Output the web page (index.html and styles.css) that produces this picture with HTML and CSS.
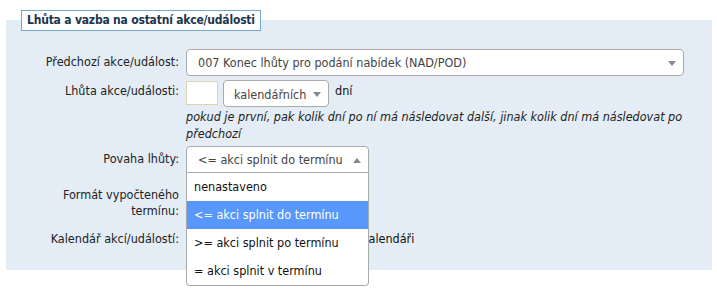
FILE: index.html
```html
<!DOCTYPE html>
<html lang="cs">
<head>
    <meta charset="UTF-8">
    <title>Lhůta a vazba</title>
    <link rel="stylesheet" href="styles.css">
</head>
<body>
    <div class="sekce">
        <div class="nadpis">Lhůta a vazba na ostatní akce/události</div>

        <div class="panel">
            <div class="radek">
                <label class="popis">Předchozí akce/událost:</label>
                <div class="pole">
                    <div class="vyber vyber-siroky">
                        <span class="vyber-text">007 Konec lhůty pro podání nabídek (NAD/POD)</span>
                        <span class="sipka"></span>
                    </div>
                </div>
            </div>

            <div class="radek">
                <label class="popis popis-lhuta">Lhůta akce/události:</label>
                <div class="pole">
                    <div class="lhuta">
                        <input type="text" class="pocet">
                        <div class="vyber vyber-maly">
                            <span class="vyber-text">kalendářních</span>
                            <span class="sipka"></span>
                        </div>
                        <span class="dni">dní</span>
                    </div>
                    <p class="napoveda">pokud je první, pak kolik dní po ní má následovat další, jinak kolik dní má následovat po předchozí</p>
                </div>
            </div>

            <div class="radek radek-povaha">
                <label class="popis">Povaha lhůty:</label>
                <div class="pole">
                    <div class="rozbaleni">
                        <div class="vyber vyber-otevreny">
                            <span class="vyber-text">&lt;= akci splnit do termínu</span>
                            <span class="sipka sipka-nahoru"></span>
                        </div>
                        <ul class="nabidka">
                            <li>nenastaveno</li>
                            <li class="vybrano">&lt;= akci splnit do termínu</li>
                            <li>&gt;= akci splnit po termínu</li>
                            <li>= akci splnit v termínu</li>
                        </ul>
                    </div>
                </div>
            </div>

            <div class="radek radek-format">
                <label class="popis popis-format">Formát vypočteného termínu:</label>
                <div class="pole"></div>
            </div>

            <div class="radek">
                <label class="popis">Kalendář akcí/událostí:</label>
                <div class="pole">
                    <label class="zaskrt"><input type="checkbox"> počítat dny jen v pracovním kalendáři</label>
                </div>
            </div>
        </div>
    </div>
</body>
</html>
```

FILE: styles.css
```css
* {
    box-sizing: border-box;
}
html {
    background: #ffffff;
}
body {
    margin: 0;
    padding: 10px 0 19px 0;
    min-height: 289px;
    background: #ffffff;
    font-family: 'DejaVu Sans Condensed', 'DejaVu Sans', sans-serif;
    font-size: 12.5px;
    color: #222222;
}
.nadpis {
    position: relative;
    z-index: 1;
    display: inline-block;
    margin-left: 21px;
    height: 21px;
    padding: 2px 5px 0 5px;
    background: #ffffff;
    border: 1px solid #72a9d2;
    font-weight: bold;
    color: #1c3650;
    font-size: 12px;
    letter-spacing: -0.2px;
    line-height: 15px;
}
.panel {
    position: relative;
    margin: -11px 5px 0 6px;
    padding-top: 29px;
    height: 250px;
    background: #e4edf5;
}
.radek {
    display: grid;
    grid-template-columns: 173px 1fr;
    column-gap: 7px;
    margin-bottom: 4px;
}
.popis {
    text-align: right;
    line-height: 16px;
    padding-top: 5px;
}
.popis-lhuta {
    padding-top: 3px;
}
.popis-format {
    padding-top: 4px;
    padding-left: 40px;
}
.radek-povaha {
    margin-top: 0;
    margin-bottom: 10px;
    position: relative;
    z-index: 5;
}
.radek-format {
    margin-bottom: 7px;
}
.vyber {
    position: relative;
    height: 28px;
    background: #ffffff;
    border: 1px solid #aaaaaa;
    border-radius: 4px;
    padding: 0 24px 0 11px;
    line-height: 26px;
    color: #444444;
    white-space: nowrap;
    overflow: hidden;
}
.vyber-siroky {
    width: 498px;
    height: 27px;
    line-height: 25px;
}
.vyber-maly {
    width: 106px;
    height: 27px;
    line-height: 27px;
    padding-left: 10px;
}
.sipka {
    position: absolute;
    right: 7px;
    top: 11px;
    border-left: 4px solid transparent;
    border-right: 4px solid transparent;
    border-top: 5px solid #888888;
}
.sipka-nahoru {
    border-top: none;
    border-bottom: 5px solid #888888;
}
.lhuta {
    display: flex;
    align-items: flex-start;
    gap: 5px;
}
.pocet {
    width: 32px;
    height: 24px;
    margin: 1px 0 0 0;
    border: 1px solid #dcd3b0;
    background: #ffffff;
}
.dni {
    padding-top: 3px;
    padding-left: 1px;
    color: #111111;
}
.napoveda {
    margin: 1px 0 0 0;
    font-style: italic;
    line-height: 17px;
    padding-right: 20px;
}
.rozbaleni {
    position: relative;
    width: 183px;
}
.vyber-otevreny {
    border-bottom-left-radius: 0;
    border-bottom-right-radius: 0;
    height: 27px;
    line-height: 26px;
}
.nabidka {
    position: absolute;
    left: 0;
    top: 27px;
    z-index: 2;
    width: 183px;
    margin: 0;
    padding: 0;
    list-style: none;
    background: #ffffff;
    border: 1px solid #aaaaaa;
    border-top: none;
    border-radius: 0 0 4px 4px;
    color: #111111;
}
.nabidka li {
    height: 28px;
    line-height: 28px;
    padding-left: 7px;
    white-space: nowrap;
}
.nabidka li.vybrano {
    background: #5897fb;
    color: #ffffff;
}
.zaskrt {
    display: inline-flex;
    align-items: center;
    gap: 0;
    padding-top: 5px;
    color: #111111;
    line-height: 16px;
}
.zaskrt input {
    margin: 0 2px 0 0;
}
```
